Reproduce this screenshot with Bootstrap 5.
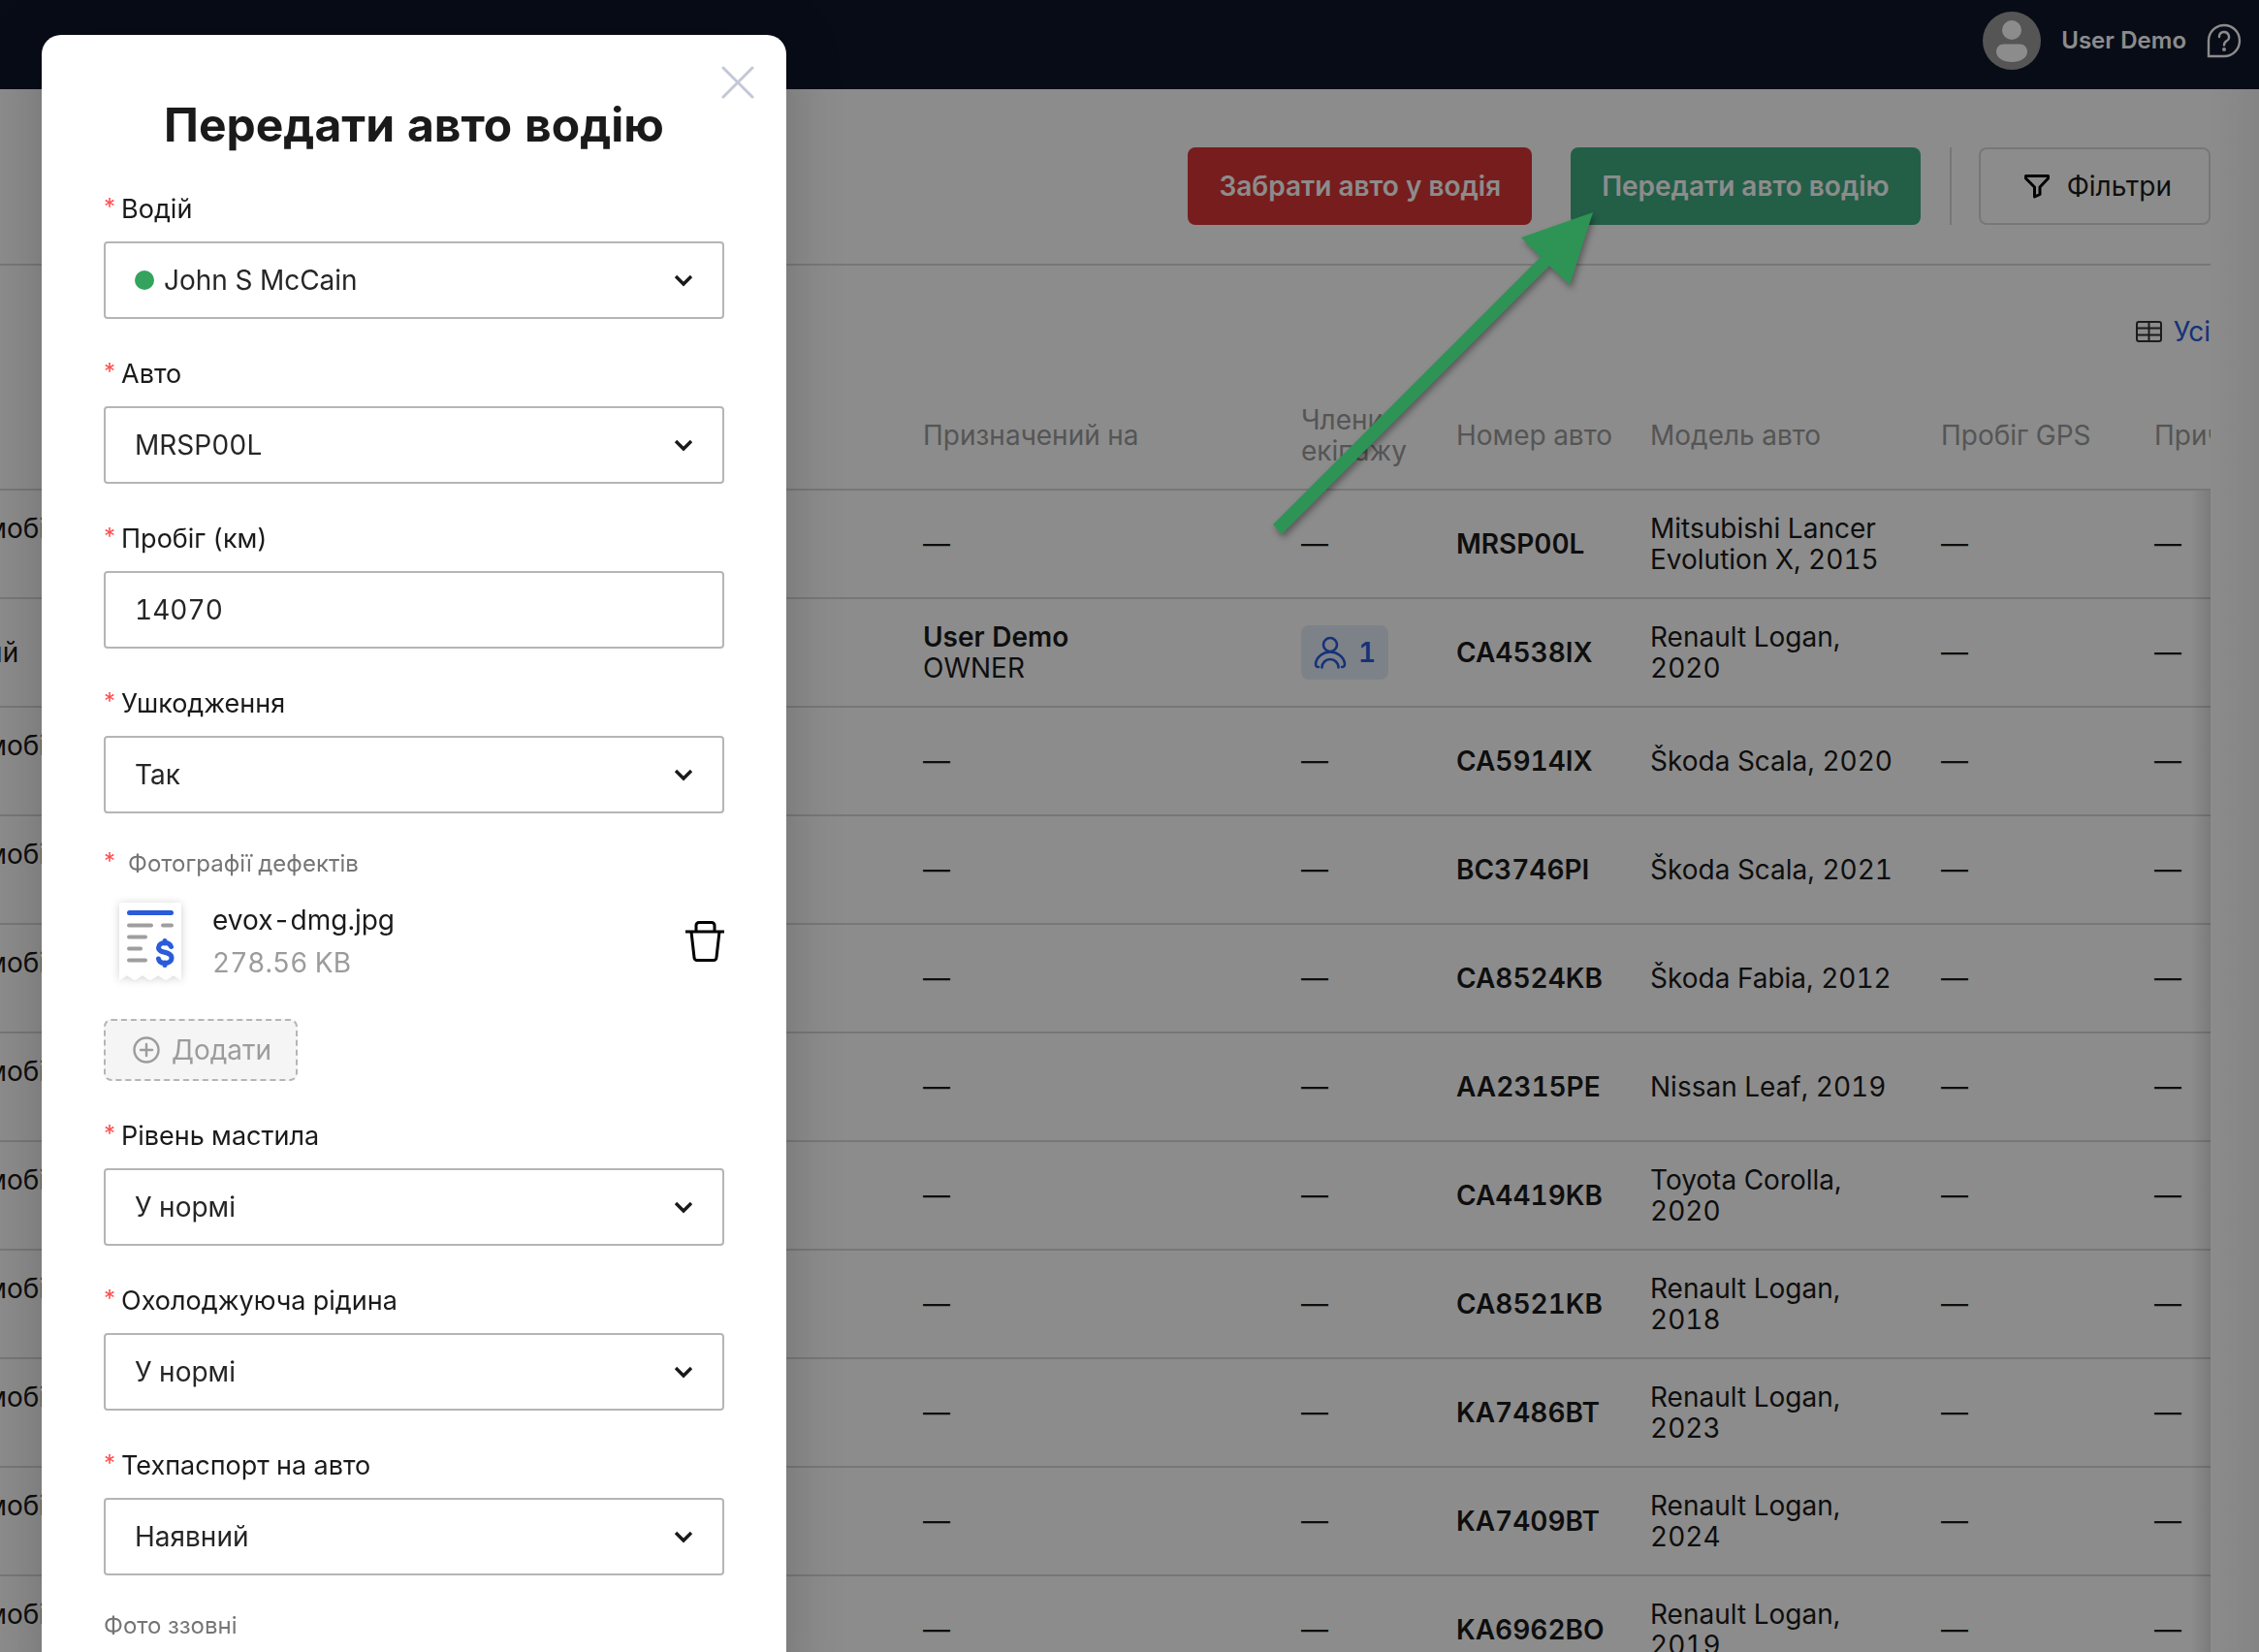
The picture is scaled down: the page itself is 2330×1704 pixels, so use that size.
<!DOCTYPE html>
<html lang="uk">
<head>
<meta charset="utf-8">
<meta name="viewport" content="width=device-width, initial-scale=1">
<title>Передати авто водію</title>
<link href="https://cdn.jsdelivr.net/npm/bootstrap@5.3.0/dist/css/bootstrap.min.css" rel="stylesheet">
<style>
  html, body { height: 100%; overflow: hidden; }
  body { font-family: Inter, "Noto Sans", sans-serif; font-size: 28px; line-height: 32px; color: #1a1a1a; font-variant-numeric: tabular-nums; }
  input, select, button { font-variant-numeric: inherit; }

  /* page */
  .topbar { height: 92px; background: #0f172a; padding: 0 18px 8px 0; gap: 21px; color: #fff; }
  .topbar-name { font-size: 24px; font-weight: 600; }
  .page { padding-right: 50px; background: linear-gradient(to left, #f0f0f0, #fff 50px); }
  .toolbar { padding: 60px 0 40px; border-bottom: 2px solid #d9d9d9; }
  .tool-btn { height: 80px; padding: 0 32px; border-radius: 8px; border: 0; font-size: 28px; font-weight: 600; color: #fff; font-variant-numeric: normal; }
  .tool-btn.is-danger { background: #d93535; margin-right: 40px; }
  .tool-btn.is-success { background: #41ab81; }
  .tool-btn.is-filter { border: 2px solid #d9d9d9; background: transparent; color: #1a1a1a; font-weight: 400; padding: 0 38px 0 44px; gap: 17px; }
  .tool-rule { width: 2px; height: 80px; background: #d9d9d9; margin: 0 28px 0 30px; }
  .viewbar { padding: 52px 0 32px; }
  .viewbar a { color: #295bdb; gap: 12px; }

  .fleet-wrap { overflow: hidden; }
  .fleet { table-layout: fixed; width: calc(100% + 221px); margin-left: -95px; border-collapse: separate; border-spacing: 0; }
  .fleet th, .fleet td { padding: 0 16px; border-bottom: 2px solid #d9d9d9; vertical-align: middle; }
  .fleet th { height: 116px; padding-top: 4px; font-weight: 400; color: #9b9b9b; }
  .fleet td { height: 112px; }
  .fleet td:nth-child(5) { padding-right: 32px; }
  .fleet td:nth-child(4) { font-weight: 600; }
  .fleet-fade { top: 116px; right: 0; bottom: 0; width: 20px; background: linear-gradient(to left, rgba(0,0,0,.12), rgba(0,0,0,0)); }
  .crew { width: 90px; height: 56px; border-radius: 8px; background: #e4edfa; color: #295bdb; font-weight: 600; gap: 12px; }
  .pointer-arrow { left: 1300px; top: 200px; z-index: 1052; filter: drop-shadow(2px 4px 3px rgba(0,0,0,.35)); }

  /* dialog */
  .modal-backdrop { --bs-backdrop-opacity: .45; }
  .modal { overflow: hidden; }
  .modal-dialog { max-width: 768px; margin: 36px 0 0 43px; }
  .modal-content { border: 0; border-radius: 20px; padding: 65px 64px 60px; color: #1a1a1a; box-shadow: 0 0 60px rgba(0,0,0,.2); }
  .modal-title { font-size: 48px; line-height: 56px; font-weight: 700; }
  .close-x { top: 29px; right: 30px; border: 0; background: none; padding: 0; line-height: 0; }
  .field { margin-top: 41px; }
  .modal-title + .field { margin-top: 43px; }
  .field > label { display: flex; font-size: 27px; line-height: 32px; margin-bottom: 17px; gap: 6px; }
  .star { color: #ff4d4f; font-size: 24px; line-height: 28px; font-variant-numeric: normal; }
  .field .form-control, .field .form-select {
    height: 80px; padding: 0 80px 0 30px; border: 2px solid #b5b5b5; border-radius: 4px;
    font-size: 28px; color: #262626; background-color: #fff;
  }
  .field .form-select {
    background-image: url("data:image/svg+xml,%3Csvg xmlns='http://www.w3.org/2000/svg' viewBox='0 0 20 14'%3E%3Cpath d='M2 3l8 8 8-8' fill='none' stroke='%231a1a1a' stroke-width='3.4'/%3E%3C/svg%3E");
    background-size: 20px 14px; background-position: right 30px center;
  }
  .field .form-select.has-dot { padding-left: 60px; }
  .status-dot { width: 20px; height: 20px; border-radius: 50%; background: #34a35d; left: 32px; top: 30px; }
  .note { font-size: 24px; line-height: 32px; color: #757575; gap: 13px; }
  .upload { margin-top: 36px; }
  .file-row { margin-top: 12px; padding-left: 4px; }
  .file-text { margin-left: 20px; }
  .file-size { color: #9c9c9c; margin-top: 12px; }
  .add-btn { height: 64px; margin-top: 28px; padding: 0 25px 0 28px; border: 2px dashed #b5b5b5; border-radius: 8px; background: #f5f5f5; color: #9c9c9c; gap: 12px; font-size: 28px; }
  .trash { border: 0; background: none; padding: 0; line-height: 0; }
</style>
</head>
<body>

<header class="topbar d-flex align-items-center justify-content-end">
  <svg width="60" height="60" viewBox="0 0 60 60" aria-hidden="true"><circle cx="30" cy="30" r="30" fill="#9b9b9b"/><circle cx="30" cy="19" r="10" fill="#fff"/><path d="M22 33.500H38C43 33.500 46 37 46 41.500C46 48 38 52 30 52S14 48 14 41.500C14 37 17 33.500 22 33.500Z" fill="#fff"/></svg>
  <span class="topbar-name">User Demo</span>
  <a href="#" class="d-flex text-white" aria-label="Довідка"><svg width="36" height="36" viewBox="0 0 36 36" fill="none" stroke="#fff" stroke-width="2.400"><path d="M2 34V18A16 16 0 1 1 18 34Z"/><path d="M13 14a5 5 0 1 1 7.500 4.300c-1.800 1.100-2.500 2-2.500 4.200" stroke-linecap="round"/><circle cx="18" cy="27" r=".8" fill="#fff"/></svg></a>
</header>

<main class="page">
  <div class="toolbar d-flex align-items-center justify-content-end">
    <button type="button" class="tool-btn is-danger">Забрати авто у водія</button>
    <button type="button" class="tool-btn is-success">Передати авто водію</button>
    <div class="tool-rule"></div>
    <button type="button" class="tool-btn is-filter d-flex align-items-center">
      <svg width="28" height="26" viewBox="0 0 28 26" fill="none" stroke="#000" stroke-width="3" stroke-linejoin="round"><path d="M2.500 2.500H25.500V5L17 14V21.500L11.500 24V14L2.500 5Z"/></svg>
      Фільтри</button>
  </div>
  <div class="viewbar d-flex justify-content-end">
    <a href="#" class="d-flex align-items-center text-decoration-none"><svg width="27" height="22" viewBox="0 0 27 22" fill="none" stroke="#333" stroke-width="2"><rect x="1" y="1" width="25" height="20" rx="2"/><path d="M1 7.500H26M1 14.500H26M13.500 1V21"/></svg>Усі</a>
  </div>

  <div class="fleet-wrap position-relative">
    <table class="fleet">
      <colgroup><col><col style="width:390px"><col style="width:160px"><col style="width:200px"><col style="width:300px"><col style="width:220px"><col style="width:200px"></colgroup>
      <thead>
        <tr><th></th><th>Призначений на</th><th>Члени екіпажу</th><th>Номер авто</th><th>Модель авто</th><th>Пробіг GPS</th><th>Причіп</th></tr>
      </thead>
      <tbody>
        <tr><td>Автомобіль<br>&nbsp;</td><td>—</td><td>—</td><td>MRSP00L</td><td>Mitsubishi Lancer Evolution X, 2015</td><td>—</td><td>—</td></tr>
        <tr><td>Легкий</td><td><span class="fw-semibold">User Demo</span><br>OWNER</td>
          <td><span class="crew d-flex align-items-center justify-content-center"><svg width="34" height="34" viewBox="0 0 34 34" fill="none" stroke="#295bdb" stroke-width="2.600" stroke-linecap="round"><circle cx="17" cy="9" r="7"/><path d="M5 32C3 32.200 2 31 2 28.500C3 21 10 16.500 17 16.500S31 21 32 28.500C32 31 31 32.200 29 32M8.500 32.500a8.500 8.500 0 0 1 17 0"/></svg>1</span></td>
          <td>CA4538IX</td><td>Renault Logan, 2020</td><td>—</td><td>—</td></tr>
        <tr><td>Автомобіль<br>&nbsp;</td><td>—</td><td>—</td><td>CA5914IX</td><td>Škoda Scala, 2020</td><td>—</td><td>—</td></tr>
        <tr><td>Автомобіль<br>&nbsp;</td><td>—</td><td>—</td><td>BC3746PI</td><td>Škoda Scala, 2021</td><td>—</td><td>—</td></tr>
        <tr><td>Автомобіль<br>&nbsp;</td><td>—</td><td>—</td><td>CA8524KB</td><td>Škoda Fabia, 2012</td><td>—</td><td>—</td></tr>
        <tr><td>Автомобіль<br>&nbsp;</td><td>—</td><td>—</td><td>AA2315PE</td><td>Nissan Leaf, 2019</td><td>—</td><td>—</td></tr>
        <tr><td>Автомобіль<br>&nbsp;</td><td>—</td><td>—</td><td>CA4419KB</td><td>Toyota Corolla, 2020</td><td>—</td><td>—</td></tr>
        <tr><td>Автомобіль<br>&nbsp;</td><td>—</td><td>—</td><td>CA8521KB</td><td>Renault Logan, 2018</td><td>—</td><td>—</td></tr>
        <tr><td>Автомобіль<br>&nbsp;</td><td>—</td><td>—</td><td>KA7486BT</td><td>Renault Logan, 2023</td><td>—</td><td>—</td></tr>
        <tr><td>Автомобіль<br>&nbsp;</td><td>—</td><td>—</td><td>KA7409BT</td><td>Renault Logan, 2024</td><td>—</td><td>—</td></tr>
        <tr><td>Автомобіль<br>&nbsp;</td><td>—</td><td>—</td><td>KA6962BO</td><td>Renault Logan, 2019</td><td>—</td><td>—</td></tr>
      </tbody>
    </table>
    <div class="fleet-fade position-absolute"></div>
  </div>
</main>

<div class="modal-backdrop show"></div>

<div class="modal show d-block" role="dialog" aria-labelledby="dlg-title">
  <div class="modal-dialog">
    <form class="modal-content">
      <button type="button" class="close-x position-absolute" aria-label="Закрити"><svg width="40" height="40" viewBox="0 0 40 40" stroke="#c3c7d6" stroke-width="3" stroke-linecap="round"><path d="M5 5L35 35M35 5L5 35"/></svg></button>
      <h1 class="modal-title text-center" id="dlg-title">Передати авто водію</h1>

      <div class="field">
        <label for="driver"><span class="star">*</span>Водій</label>
        <div class="position-relative">
          <select id="driver" class="form-select has-dot"><option>John S McCain</option></select>
          <span class="status-dot position-absolute"></span>
        </div>
      </div>
      <div class="field">
        <label for="car"><span class="star">*</span>Авто</label>
        <select id="car" class="form-select"><option>MRSP00L</option></select>
      </div>
      <div class="field">
        <label for="mileage"><span class="star">*</span>Пробіг (км)</label>
        <input id="mileage" class="form-control" type="text" value="14070">
      </div>
      <div class="field">
        <label for="damage"><span class="star">*</span>Ушкодження</label>
        <select id="damage" class="form-select"><option>Так</option></select>
      </div>

      <div class="upload">
        <div class="note d-flex"><span class="star">*</span>Фотографії дефектів</div>
        <div class="file-row d-flex align-items-center">
          <svg width="88" height="104" viewBox="0 0 88 104" aria-hidden="true">
            <defs><filter id="soft" x="-30%" y="-30%" width="160%" height="160%"><feDropShadow dx="0" dy="1" stdDeviation="4" flood-color="#000" flood-opacity=".18"/></filter></defs>
            <path d="M14 12H74a2 2 0 0 1 2 2V92l-8-5-8 5-8-5-8 5-8-5-8 5-8-5-8 5V14a2 2 0 0 1 2-2Z" fill="#fff" filter="url(#soft)"/>
            <g stroke-linecap="round" fill="none">
              <path d="M22.500 22.500H65.500" stroke="#295bdb" stroke-width="5"/>
              <path d="M22 35.500H45M57 35.500H66M22 47.500H39M22 59.500H34M22 71.500H39" stroke="#9e9e9e" stroke-width="4"/>
              <path d="M65.500 57.500C64.500 54.500 62 53.500 59 53.500C55 53.500 52.500 55.500 52.500 58.500C52.500 65 66 61.500 66 69C66 72.500 63 74.500 59 74.500C55.500 74.500 53 73 52.500 70M59 51.500V54M59 74V76.500" stroke="#295bdb" stroke-width="5"/>
            </g>
          </svg>
          <div class="file-text">
            <div>evox-dmg.jpg</div>
            <div class="file-size">278.56 KB</div>
          </div>
          <button type="button" class="trash ms-auto" aria-label="Видалити"><svg width="40" height="42" viewBox="0 0 40 42" fill="none" stroke="#000" stroke-width="3" stroke-linejoin="round"><path d="M0 11H40M11 11V4.500a3 3 0 0 1 3-3H27a3 3 0 0 1 3 3V11M6 11L9 37.500a3 3 0 0 0 3 3H29a3 3 0 0 0 3-3L35 11"/></svg></button>
        </div>
        <button type="button" class="add-btn d-flex align-items-center"><svg width="28" height="28" viewBox="0 0 28 28" fill="none" stroke="#9c9c9c" stroke-width="2.400" stroke-linecap="round"><circle cx="14" cy="14" r="12.500"/><path d="M8 14H20M14 8V20"/></svg>Додати</button>
      </div>

      <div class="field">
        <label for="oil"><span class="star">*</span>Рівень мастила</label>
        <select id="oil" class="form-select"><option>У нормі</option></select>
      </div>
      <div class="field">
        <label for="coolant"><span class="star">*</span>Охолоджуюча рідина</label>
        <select id="coolant" class="form-select"><option>У нормі</option></select>
      </div>
      <div class="field">
        <label for="passport"><span class="star">*</span>Техпаспорт на авто</label>
        <select id="passport" class="form-select"><option>Наявний</option></select>
      </div>
      <div class="upload"><div class="note">Фото ззовні</div></div>
    </form>
  </div>
</div>

<svg class="pointer-arrow position-absolute" width="360" height="370" viewBox="0 0 360 370" aria-hidden="true"><path d="M343 19L269 45L289 65L13 341L22 351L298 74L319 94Z" fill="#2e9455"/></svg>

<script src="https://cdn.jsdelivr.net/npm/bootstrap@5.3.0/dist/js/bootstrap.bundle.min.js"></script>
</body>
</html>
